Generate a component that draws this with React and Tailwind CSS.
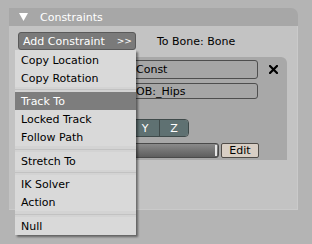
import React from "react";

const font = { fontFamily: '"DejaVu Sans", "Liberation Sans", sans-serif' };

function Item({ children, active }) {
  return (
    <div
      className={
        "h-[18px] flex items-center pl-[6px] text-[11px] leading-none " +
        (active ? "bg-[#7d7d7d] text-white" : "text-black")
      }
    >
      {children}
    </div>
  );
}

function Sep() {
  return (
    <div className="h-[5px] flex items-center bg-[#d3d3d3]">
      <div className="w-full h-px bg-[#c2c2c2]" />
    </div>
  );
}

function Sep6() {
  return (
    <div className="h-[6px] flex items-center bg-[#d3d3d3]">
      <div className="w-full h-px bg-[#c2c2c2]" />
    </div>
  );
}

export default function App() {
  return (
    <div
      className="relative w-[312px] h-[244px] bg-[#b4b4b4] pl-[9px] pt-[8px] overflow-hidden"
      style={font}
    >
      <div className="w-[289px] flex flex-col">
        {/* header */}
        <div className="h-[18px] bg-[#a7a7a7] rounded-tr-[7px] flex items-center pl-[10px] gap-[12px]">
          <svg width="9" height="8" viewBox="0 0 9 8">
            <polygon points="0,0 9,0 4.5,8" fill="#ffffff" />
          </svg>
          <span className="text-white text-[11px] leading-none">Constraints</span>
        </div>
        {/* body */}
        <div className="h-[184px] bg-[#c3c3c3] border-r border-b border-[#cacaca] pl-[9px] pt-[6px] flex flex-col">
          <div className="flex items-center h-[18px]">
            <div className="w-[118px] h-[18px] rounded-[3px] bg-[#7a7a7a] border border-[#5a5a5a] flex items-center pl-[4px] text-white text-[11px] leading-none">
              <span>Add Constraint</span>
              <span className="ml-[12px] text-[9px]">&gt;&gt;</span>
            </div>
            <span className="ml-[21px] text-[11px] text-black leading-none">To Bone: Bone</span>
          </div>
          {/* constraint box */}
          <div className="mt-[7px] w-[269px] h-[103px] bg-[#a8a8a8] rounded-tr-[6px] pt-[3px] flex flex-col">
            <div className="flex items-center">
              <div className="ml-[100px] w-[140px] h-[19px] rounded-[3px] border border-[#4e4e4e] bg-[#a6a6a6] flex items-center pl-[2px] text-[11px] text-black leading-none">
                <span className="ml-[15px]">Const</span>
              </div>
              <svg className="ml-[11px]" width="9" height="9" viewBox="0 0 9 9">
                <path d="M1 1 L8 8 M8 1 L1 8" stroke="#000" strokeWidth="2.2" strokeLinecap="square" />
              </svg>
            </div>
            <div className="mt-[4px] ml-[100px] w-[140px] h-[16px] rounded-[3px] border border-[#4e4e4e] bg-[#a6a6a6] flex items-center text-[11px] text-black leading-none">
              <span className="ml-[17px]">OB:_Hips</span>
            </div>
            <div className="mt-[20px] flex items-center">
              <div className="ml-[84px] flex h-[18px] rounded-r-[4px] overflow-hidden border border-[#3f4a4a]">
                <div className="w-[28px] bg-[#5f7172] border-r border-[#3f4a4a]" />
                <div className="w-[29px] bg-[#5f7172] border-r border-[#3f4a4a] flex items-center justify-center text-white text-[11px] leading-none">Y</div>
                <div className="w-[28px] bg-[#5f7172] flex items-center justify-center text-white text-[11px] leading-none">Z</div>
              </div>
            </div>
            <div className="mt-[6px] flex items-center">
              <div className="ml-[20px] w-[181px] h-[15px] rounded-[3px] border border-[#4a4a4a] bg-gradient-to-b from-[#8a8a8a] to-[#5e5e5e] flex items-center justify-end pr-[1px]">
                <div className="w-[2px] h-[11px] bg-[#e6e6e6]" />
              </div>
              <div className="ml-[2px] w-[38px] h-[15px] rounded-[2px] border border-[#4f4b47] bg-[#d8cec4] flex items-center justify-center text-[11px] text-black leading-none">
                Edit
              </div>
            </div>
          </div>
        </div>
      </div>

      {/* dropdown menu */}
      <div className="absolute left-[15px] top-[50px] w-[121px] bg-[#d9d9d9] pt-px shadow-[2px_2px_2px_rgba(0,0,0,0.45)]">
        <Item>Copy Location</Item>
        <Item>Copy Rotation</Item>
        <Sep />
        <Item active>Track To</Item>
        <Item>Locked Track</Item>
        <Item>Follow Path</Item>
        <Sep6 />
        <Item>Stretch To</Item>
        <Sep />
        <Item>IK Solver</Item>
        <Item>Action</Item>
        <Sep6 />
        <Item>Null</Item>
      </div>
    </div>
  );
}
